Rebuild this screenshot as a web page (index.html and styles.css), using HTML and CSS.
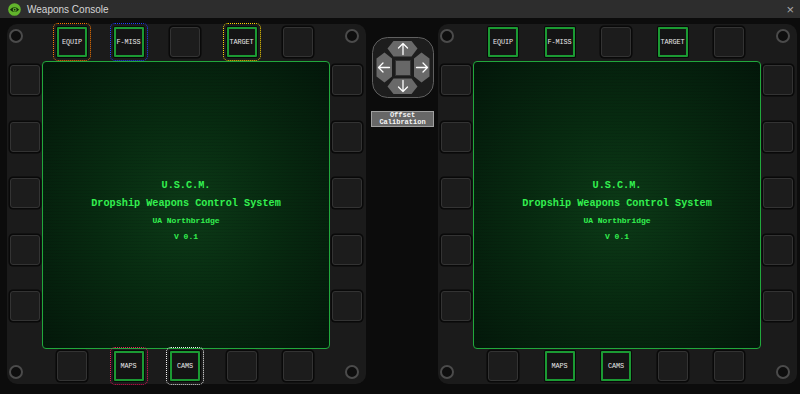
FILE: index.html
```html
<!DOCTYPE html>
<html>
<head>
<meta charset="utf-8">
<link rel="stylesheet" href="styles.css">
</head>
<body>
<div class="window">
  <div class="titlebar">
    <svg class="logo" width="13" height="13" viewBox="0 0 14 14">
      <circle cx="7" cy="7" r="6.8" fill="#62b52c"/>
      <path d="M2 7.2 Q7 2 12 7.2 Q7 12.2 2 7.2Z" fill="#16300c"/>
      <circle cx="7.2" cy="7.2" r="2.1" fill="#62b52c"/>
      <circle cx="7.2" cy="7.2" r="0.9" fill="#16300c"/>
    </svg>
    <span class="title">Weapons Console</span>
    <span class="close">×</span>
  </div>
  <div class="console">
    <div class="panel">
      <div class="corner tl"><span class="screw"></span></div>
      <div class="toprow">
        <div class="btn lbl o-orange">EQUIP</div>
        <div class="btn lbl o-blue">F-MISS</div>
        <div class="btn"></div>
        <div class="btn lbl o-yellow">TARGET</div>
        <div class="btn"></div>
      </div>
      <div class="corner tr"><span class="screw"></span></div>
      <div class="side left">
        <div class="btn"></div><div class="btn"></div><div class="btn"></div><div class="btn"></div><div class="btn"></div>
      </div>
      <div class="screen">
        <div class="l1">U.S.C.M.</div>
        <div class="l2">Dropship Weapons Control System</div>
        <div class="l3">UA Northbridge</div>
        <div class="l4">V 0.1</div>
      </div>
      <div class="side right">
        <div class="btn"></div><div class="btn"></div><div class="btn"></div><div class="btn"></div><div class="btn"></div>
      </div>
      <div class="corner bl"><span class="screw"></span></div>
      <div class="botrow">
        <div class="btn"></div>
        <div class="btn lbl o-pink">MAPS</div>
        <div class="btn lbl o-white">CAMS</div>
        <div class="btn"></div>
        <div class="btn"></div>
      </div>
      <div class="corner br"><span class="screw"></span></div>
    </div>

    <div class="center">
      <svg class="dpad" width="62" height="61" viewBox="0 0 62 61">
        <rect x="0.5" y="0.5" width="61" height="60" rx="15" fill="#1d1d1d" stroke="#606060"/>
        <polygon points="21.5,4 39.5,4 45.5,11.5 39.5,19.5 21.5,19.5 15.5,11.5" fill="#696969"/>
        <polygon points="21.5,41.5 39.5,41.5 45.5,49.5 39.5,57 21.5,57 15.5,49.5" fill="#696969"/>
        <polygon points="4.5,21.5 12.5,15.5 20,21.5 20,39.5 12.5,45.5 4.5,39.5" fill="#696969"/>
        <polygon points="42,21.5 49.5,15.5 57.5,21.5 57.5,39.5 49.5,45.5 42,39.5" fill="#696969"/>
        <rect x="23.5" y="23.5" width="15" height="15" fill="#676767" stroke="#333"/>
        <g fill="none" stroke="#fff" stroke-width="1.3" stroke-linecap="round" stroke-linejoin="round">
          <path d="M31 17.5 V6.5 M26.5 11 L31 6.5 L35.5 11"/>
          <path d="M31 43.5 V54.5 M26.5 50 L31 54.5 L35.5 50"/>
          <path d="M6.5 30.5 H17.5 M11 26 L6.5 30.5 L11 35"/>
          <path d="M55.5 30.5 H44.5 M51 26 L55.5 30.5 L51 35"/>
        </g>
      </svg>
      <div class="calib">Offset<br>Calibration</div>
    </div>

    <div class="panel">
      <div class="corner tl"><span class="screw"></span></div>
      <div class="toprow">
        <div class="btn lbl">EQUIP</div>
        <div class="btn lbl">F-MISS</div>
        <div class="btn"></div>
        <div class="btn lbl">TARGET</div>
        <div class="btn"></div>
      </div>
      <div class="corner tr"><span class="screw"></span></div>
      <div class="side left">
        <div class="btn"></div><div class="btn"></div><div class="btn"></div><div class="btn"></div><div class="btn"></div>
      </div>
      <div class="screen">
        <div class="l1">U.S.C.M.</div>
        <div class="l2">Dropship Weapons Control System</div>
        <div class="l3">UA Northbridge</div>
        <div class="l4">V 0.1</div>
      </div>
      <div class="side right">
        <div class="btn"></div><div class="btn"></div><div class="btn"></div><div class="btn"></div><div class="btn"></div>
      </div>
      <div class="corner bl"><span class="screw"></span></div>
      <div class="botrow">
        <div class="btn"></div>
        <div class="btn lbl">MAPS</div>
        <div class="btn lbl">CAMS</div>
        <div class="btn"></div>
        <div class="btn"></div>
      </div>
      <div class="corner br"><span class="screw"></span></div>
    </div>
  </div>
</div>
</body>
</html>
```
FILE: styles.css
```css
* { box-sizing: border-box; }
html, body { margin: 0; padding: 0; }
body {
  width: 800px;
  height: 394px;
  overflow: hidden;
  background: #0c0c0c;
  font-family: "Liberation Sans", Arial, sans-serif;
}
.window { width: 800px; height: 394px; display: flex; flex-direction: column; }
.titlebar {
  height: 18px;
  background: #2d2d2d;
  display: flex;
  align-items: center;
  padding-left: 8px;
  padding-right: 6px;
  color: #d6d6d6;
}
.logo { display: block; }
.title { font-size: 10px; margin-left: 6px; flex: 1; }
.close { font-size: 13px; color: #a8a8a8; line-height: 1; }

.console {
  flex: 1;
  display: flex;
  padding: 6px 3px 10px 7px;
  background: #0c0c0c;
}
.panel {
  width: 359px;
  height: 360px;
  background: #1b1b1b;
  border-radius: 10px;
  display: grid;
  grid-template-columns: 32px 288px 32px;
  grid-template-rows: 34px 288px 32px;
  padding: 3px 4px 3px 3px;
}
.screw {
  display: block;
  width: 14px;
  height: 14px;
  border-radius: 50%;
  border: 2px solid #4b4b4b;
  background: #0e0e0e;
}
.corner.tl .screw { margin: 2px 0 0 -1px; }
.corner.tr .screw { margin: 2px 0 0 15px; }
.corner.bl .screw { margin: 16px 0 0 -1px; }
.corner.br .screw { margin: 16px 0 0 15px; }

.toprow, .botrow {
  display: flex;
  gap: 26.5px;
  padding-left: 15px;
}
.toprow { align-items: flex-start; }
.botrow { align-items: flex-end; }
.side {
  display: flex;
  flex-direction: column;
  gap: 26.5px;
  padding-top: 4px;
}
.side.left { align-items: flex-start; }
.side.right { align-items: flex-end; }

.btn {
  width: 30px;
  height: 30px;
  flex: none;
  background: #1c1c1c;
  border: 1px solid #333;
  border-radius: 3px;
  box-shadow: 0 0 0 1.5px #090909;
}
.btn.lbl {
  border: 2px solid #1b9a33;
  border-radius: 1px;
  background: #141414;
  box-shadow: 0 0 0 1px #080808;
  display: flex;
  align-items: center;
  justify-content: center;
  font-family: "Liberation Mono", "Courier New", monospace;
  font-size: 6.8px;
  color: #e8e8e8;
  letter-spacing: -0.1px;
}
.o-orange { outline: 1px dotted #ff7a00; outline-offset: 3px; }
.o-blue { outline: 1px dotted #1f3cff; outline-offset: 3px; }
.o-yellow { outline: 1px dotted #ffd800; outline-offset: 3px; }
.o-pink { outline: 1px dotted #e8175d; outline-offset: 3px; }
.o-white { outline: 1px dotted #f2f2f2; outline-offset: 3px; }

.screen {
  border: 1px solid #21a83c;
  border-radius: 4px;
  background:
    repeating-linear-gradient(to bottom, rgba(0,0,0,0) 0px, rgba(0,0,0,0) 2px, rgba(0,0,0,0.08) 2px, rgba(0,0,0,0.08) 3px),
    radial-gradient(ellipse at 50% 52%, #0c3a17 0%, #072a10 45%, #03170a 100%);
  display: flex;
  flex-direction: column;
  align-items: center;
  justify-content: center;
  padding-top: 12px;
  font-family: "Liberation Mono", "Courier New", monospace;
  font-weight: bold;
  color: #33f04f;
}
.l1, .l2 { font-size: 10.2px; line-height: 18px; }
.l3, .l4 { font-size: 8px; line-height: 16px; }

.center {
  width: 72px;
  flex: none;
  display: flex;
  flex-direction: column;
  align-items: center;
  padding-top: 13px;
  padding-left: 1px;
}
.dpad { display: block; }
.calib {
  margin-top: 13px;
  width: 63px;
  height: 16px;
  background: #676767;
  border: 1px solid #a0a0a0;
  color: #f4f4f4;
  font-family: "Liberation Mono", "Courier New", monospace;
  font-weight: bold;
  font-size: 7px;
  line-height: 7px;
  text-align: center;
}
```
